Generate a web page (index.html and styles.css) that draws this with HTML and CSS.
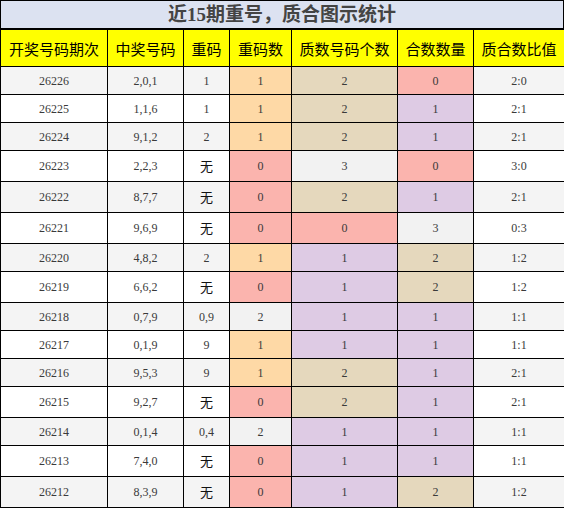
FILE: index.html
```html
<!DOCTYPE html>
<html lang="zh-CN">
<head>
    <meta charset="UTF-8">
    <meta name="viewport" content="width=device-width, initial-scale=1.0">
    <link rel="stylesheet" href="styles.css">
</head>
<body>

	<!-- 重号 / 质合 统计 -->
	<div class="stat-box">
		<div class="stat-title">近15期重号，质合图示统计</div>
		<table class="stat-table">
			<colgroup>
				<col class="c-issue"><col class="c-num"><col class="c-rep"><col class="c-repn"><col class="c-prime"><col class="c-comp"><col class="c-ratio">
			</colgroup>
			<thead>
				<tr><th>开奖号码期次</th><th>中奖号码</th><th>重码</th><th>重码数</th><th>质数号码个数</th><th>合数数量</th><th>质合数比值</th></tr>
			</thead>
			<tbody>
				<tr><td>26226</td><td>2,0,1</td><td>1</td><td class="or">1</td><td class="tan">2</td><td class="pk">0</td><td>2:0</td></tr>
				<tr><td>26225</td><td>1,1,6</td><td>1</td><td class="or">1</td><td class="tan">2</td><td class="pu">1</td><td>2:1</td></tr>
				<tr><td>26224</td><td>9,1,2</td><td>2</td><td class="or">1</td><td class="tan">2</td><td class="pu">1</td><td>2:1</td></tr>
				<tr><td>26223</td><td>2,2,3</td><td class="wu">无</td><td class="pk">0</td><td class="gr">3</td><td class="pk">0</td><td>3:0</td></tr>
				<tr><td>26222</td><td>8,7,7</td><td class="wu">无</td><td class="pk">0</td><td class="tan">2</td><td class="pu">1</td><td>2:1</td></tr>
				<tr><td>26221</td><td>9,6,9</td><td class="wu">无</td><td class="pk">0</td><td class="pk">0</td><td class="gr">3</td><td>0:3</td></tr>
				<tr><td>26220</td><td>4,8,2</td><td>2</td><td class="or">1</td><td class="pu">1</td><td class="tan">2</td><td>1:2</td></tr>
				<tr><td>26219</td><td>6,6,2</td><td class="wu">无</td><td class="pk">0</td><td class="pu">1</td><td class="tan">2</td><td>1:2</td></tr>
				<tr><td>26218</td><td>0,7,9</td><td>0,9</td><td class="gr">2</td><td class="pu">1</td><td class="pu">1</td><td>1:1</td></tr>
				<tr><td>26217</td><td>0,1,9</td><td>9</td><td class="or">1</td><td class="pu">1</td><td class="pu">1</td><td>1:1</td></tr>
				<tr><td>26216</td><td>9,5,3</td><td>9</td><td class="or">1</td><td class="tan">2</td><td class="pu">1</td><td>2:1</td></tr>
				<tr><td>26215</td><td>9,2,7</td><td class="wu">无</td><td class="pk">0</td><td class="tan">2</td><td class="pu">1</td><td>2:1</td></tr>
				<tr><td>26214</td><td>0,1,4</td><td>0,4</td><td class="gr">2</td><td class="pu">1</td><td class="pu">1</td><td>1:1</td></tr>
				<tr><td>26213</td><td>7,4,0</td><td class="wu">无</td><td class="pk">0</td><td class="pu">1</td><td class="pu">1</td><td>1:1</td></tr>
				<tr><td>26212</td><td>8,3,9</td><td class="wu">无</td><td class="pk">0</td><td class="pu">1</td><td class="tan">2</td><td>1:2</td></tr>
			</tbody>
		</table>
	</div>

</body>
</html>
```

FILE: styles.css
```css
/* 기본 */
body {margin: 0; background: #fff; font-family: "Liberation Serif", "Noto Sans CJK SC", serif;}

/* 제목 */
.stat-box {width: 564px;}
.stat-box .stat-title {height: 27px; line-height: 27px; border: 1px solid #000; background: #dce2f1; color: #444; font-size: 19px; font-weight: bold; text-align: center; }

/* 표 */
.stat-table {width: 564px; border-collapse: collapse; table-layout: fixed; border: 1px solid #000; }
.stat-table .c-issue {width: 107px}
.stat-table .c-num {width: 76px}
.stat-table .c-rep {width: 46px}
.stat-table .c-repn {width: 62px}
.stat-table .c-prime {width: 106px}
.stat-table .c-comp {width: 76px}
.stat-table .c-ratio {width: 91px}
.stat-table th {height: 36px; padding: 0; background: #ff0; color: #000; font-size: 15px; font-weight: normal; border: 1px solid #000; font-family: "Noto Sans CJK SC", sans-serif; }
.stat-table td {height: 27px; padding: 0; line-height: 14px; border: 1px solid #000; text-align: center; font-size: 12px; color: #3a3a3a; }
.stat-table td.wu {height: 30px; color: #111; font-family: "Noto Sans CJK SC", sans-serif; font-size: 13px; }
.stat-table tbody tr:nth-child(odd) {background: #f4f4f4}

/* 색 구분 */
.stat-table td.or {background: #fed9a6}
.stat-table td.pk {background: #fbb4ae}
.stat-table td.pu {background: #decbe4}
.stat-table td.tan {background: #e5d8bd}
.stat-table td.gr {background: #f2f2f2}
```
